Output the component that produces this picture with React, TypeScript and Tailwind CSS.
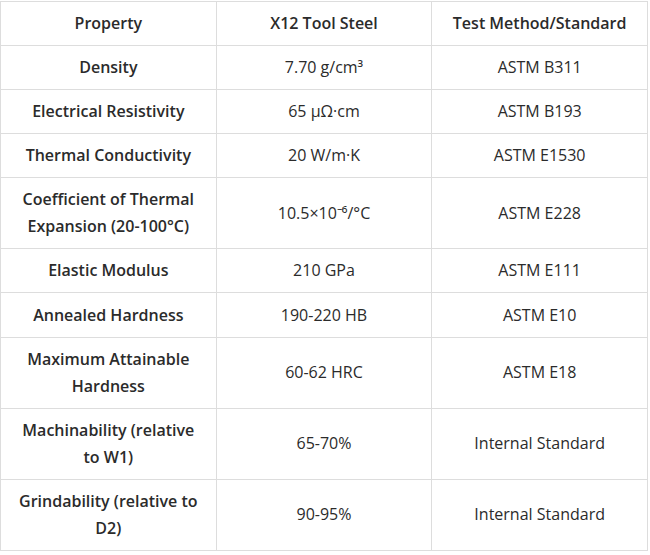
import React from 'react';

const rows: [string, string, string][] = [
  ['Density', '7.70 g/cm³', 'ASTM B311'],
  ['Electrical Resistivity', '65 μΩ·cm', 'ASTM B193'],
  ['Thermal Conductivity', '20 W/m·K', 'ASTM E1530'],
  ['Coefficient of Thermal Expansion (20-100°C)', '10.5×10⁻⁶/°C', 'ASTM E228'],
  ['Elastic Modulus', '210 GPa', 'ASTM E111'],
  ['Annealed Hardness', '190-220 HB', 'ASTM E10'],
  ['Maximum Attainable Hardness', '60-62 HRC', 'ASTM E18'],
  ['Machinability (relative to W1)', '65-70%', 'Internal Standard'],
  ['Grindability (relative to D2)', '90-95%', 'Internal Standard'],
];

export default function App() {
  return (
    <div className="bg-white pt-px font-['Open_Sans',sans-serif] text-[#2b2b2b]">
      <table className="w-[648px] table-fixed border-collapse text-center text-[16px] leading-[26.9px]">
        <thead>
          <tr>
            <th className="border border-[#dddddd] px-[14px] py-[8.1px] font-semibold">Property</th>
            <th className="border border-[#dddddd] px-[14px] py-[8.1px] font-semibold">X12 Tool Steel</th>
            <th className="border border-[#dddddd] px-[14px] py-[8.1px] font-semibold">Test Method/Standard</th>
          </tr>
        </thead>
        <tbody>
          {rows.map(([prop, value, method]) => (
            <tr key={prop}>
              <td className="border border-[#dddddd] px-[14px] py-[8.1px] font-semibold">{prop}</td>
              <td className="border border-[#dddddd] px-[14px] py-[8.1px]">{value}</td>
              <td className="border border-[#dddddd] px-[14px] py-[8.1px]">{method}</td>
            </tr>
          ))}
        </tbody>
      </table>
    </div>
  );
}
